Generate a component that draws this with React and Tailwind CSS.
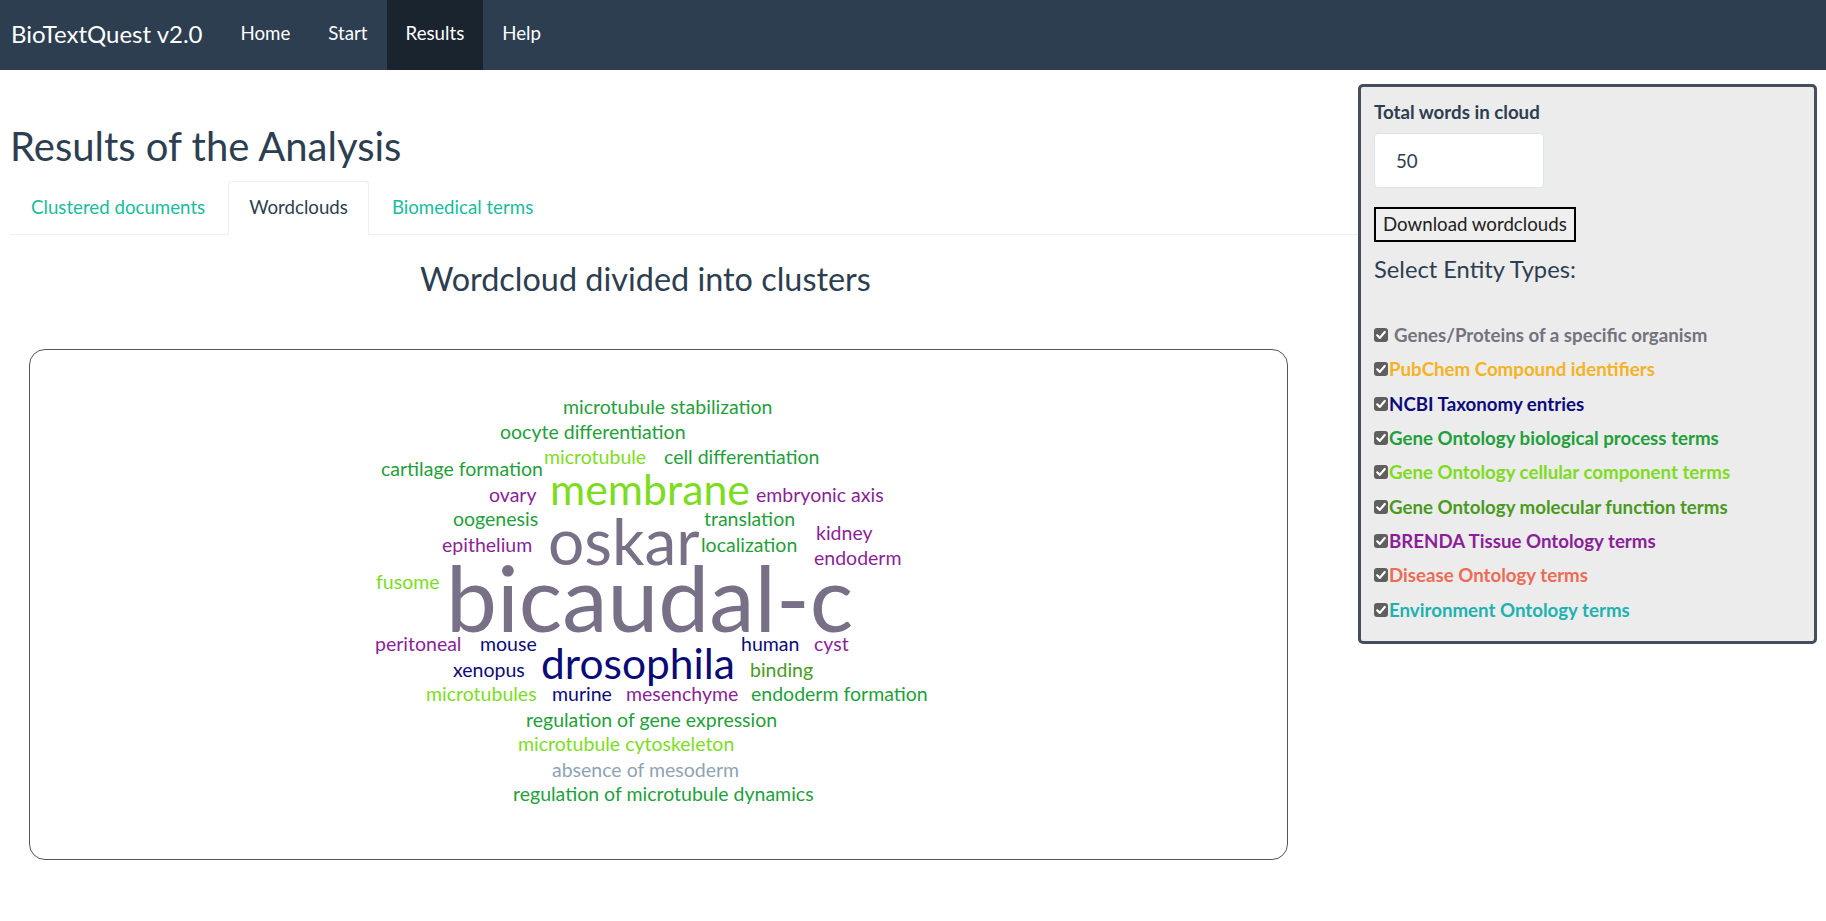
import React from 'react';

const words = [
  { t: 'microtubule stabilization', x: 562, y: 407, s: 19.5, c: '#1fa03b' },
  { t: 'oocyte differentiation', x: 499, y: 432, s: 19.5, c: '#1fa03b' },
  { t: 'microtubule', x: 543, y: 457, s: 19.5, c: '#7ddc1f' },
  { t: 'cell differentiation', x: 663, y: 457, s: 19.5, c: '#1fa03b' },
  { t: 'cartilage formation', x: 380, y: 469, s: 19.5, c: '#1fa03b' },
  { t: 'membrane', x: 549, y: 491, s: 42.8, c: '#7ddc1f' },
  { t: 'ovary', x: 488, y: 495, s: 19.5, c: '#8b1f98' },
  { t: 'embryonic axis', x: 755, y: 495, s: 19.5, c: '#8b1f98' },
  { t: 'oogenesis', x: 452, y: 519, s: 19.5, c: '#1fa03b' },
  { t: 'translation', x: 703, y: 519, s: 19.5, c: '#1fa03b' },
  { t: 'oskar', x: 547, y: 544, s: 64, c: '#787086' },
  { t: 'kidney', x: 815, y: 533, s: 19.5, c: '#8b1f98' },
  { t: 'epithelium', x: 441, y: 545, s: 19.5, c: '#8b1f98' },
  { t: 'localization', x: 700, y: 545, s: 19.5, c: '#1fa03b' },
  { t: 'endoderm', x: 813, y: 558, s: 19.5, c: '#8b1f98' },
  { t: 'fusome', x: 375, y: 582, s: 19.5, c: '#7ddc1f' },
  { t: 'bicaudal-c', x: 445, y: 600.5, s: 91, c: '#787086' },
  { t: 'peritoneal', x: 374, y: 644, s: 19.5, c: '#8b1f98' },
  { t: 'mouse', x: 479, y: 644, s: 19.5, c: '#0b0b78' },
  { t: 'human', x: 740, y: 644, s: 19.5, c: '#0b0b78' },
  { t: 'cyst', x: 813, y: 644, s: 19.5, c: '#8b1f98' },
  { t: 'xenopus', x: 452, y: 670, s: 19.5, c: '#0b0b78' },
  { t: 'drosophila', x: 540, y: 665, s: 42.5, c: '#0b0b78' },
  { t: 'binding', x: 749, y: 670, s: 19.5, c: '#4a9a1e' },
  { t: 'microtubules', x: 425, y: 694, s: 19.5, c: '#7ddc1f' },
  { t: 'murine', x: 551, y: 694, s: 19.5, c: '#0b0b78' },
  { t: 'mesenchyme', x: 625, y: 694, s: 19.5, c: '#8b1f98' },
  { t: 'endoderm formation', x: 750, y: 694, s: 19.5, c: '#1fa03b' },
  { t: 'regulation of gene expression', x: 525, y: 720, s: 19.5, c: '#1fa03b' },
  { t: 'microtubule cytoskeleton', x: 517, y: 744, s: 19.5, c: '#7ddc1f' },
  { t: 'absence of mesoderm', x: 551, y: 770, s: 19.5, c: '#8fa3b4' },
  { t: 'regulation of microtubule dynamics', x: 512, y: 794, s: 19.5, c: '#1fa03b' },
];

const entityTypes = [
  { label: 'Genes/Proteins of a specific organism', color: 'text-[#74727c]', first: true },
  { label: 'PubChem Compound identifiers', color: 'text-[#f5b324]' },
  { label: 'NCBI Taxonomy entries', color: 'text-[#0b0b7a]' },
  { label: 'Gene Ontology biological process terms', color: 'text-[#1fa03b]' },
  { label: 'Gene Ontology cellular component terms', color: 'text-[#7ddc1f]' },
  { label: 'Gene Ontology molecular function terms', color: 'text-[#4a9a1e]' },
  { label: 'BRENDA Tissue Ontology terms', color: 'text-[#8b1f98]' },
  { label: 'Disease Ontology terms', color: 'text-[#ec6b55]' },
  { label: 'Environment Ontology terms', color: 'text-[#20b2ae]' },
];

const CheckBox = () => (
  <span className="w-[14px] h-[14px] rounded-[3px] bg-[#5f5f5f] flex items-center justify-center shrink-0">
    <svg width="12" height="12" viewBox="0 0 12 12">
      <path d="M2.2 6.3 L4.8 8.9 L9.8 3" fill="none" stroke="#fff" strokeWidth="2.2" strokeLinecap="round" strokeLinejoin="round" />
    </svg>
  </span>
);

const App = () => {
  return (
    <div className="min-h-screen bg-white font-['Lato',sans-serif] text-[18.7px] text-[#2c3e50]">
      {/* Navbar */}
      <nav className="h-[70px] bg-[#2c3e50] flex items-stretch">
        <div className="flex items-center pl-[11px] pr-[19px] pb-[3px] text-white text-[24px]">BioTextQuest v2.0</div>
        <a className="flex items-center px-[19px] pb-[3px] text-white">Home</a>
        <a className="flex items-center px-[19px] pb-[3px] text-white">Start</a>
        <a className="flex items-center px-[19px] pb-[3px] text-white bg-[#1a242f]">Results</a>
        <a className="flex items-center px-[19px] pb-[3px] text-white">Help</a>
      </nav>

      <div className="flex pl-[10px] pr-[9px]">
        {/* Main panel */}
        <div className="flex-1">
          <h1 className="text-[40px] leading-[44px] pt-[54px] pb-[13px]">Results of the Analysis</h1>

          <div className="flex border-b border-[#ecf0f1]">
            <div className="px-[21px] py-[14px] mr-[2px] leading-[25px] text-[#18bc9c]">Clustered documents</div>
            <div className="px-[20px] py-[13px] mr-[2px] leading-[25px] bg-white border border-[#ecf0f1] border-b-white -mb-px rounded-t-[4px]">Wordclouds</div>
            <div className="px-[21px] py-[14px] leading-[25px] text-[#18bc9c]">Biomedical terms</div>
          </div>

          <h3 className="text-[32.4px] leading-[38px] pl-[410px] pt-[25px]">Wordcloud divided into clusters</h3>

          <div className="relative ml-[19px] mt-[51px] w-[1259px] h-[511px] border border-[#555] rounded-[16px]">
            {words.map((w) => (
              <span
                key={w.t}
                className="absolute whitespace-nowrap leading-none"
                style={{ left: w.x - 29, top: w.y - 348 - w.s * 0.55 - 1.5, fontSize: w.s, color: w.c }}
              >
                {w.t}
              </span>
            ))}
          </div>
        </div>

        {/* Sidebar */}
        <aside className="w-[459px] mt-[14px] self-start h-[560px] bg-[#ececec] border-[3px] border-[#454e5c] rounded-[5px] px-[13px] pt-[13px]">
          <div className="font-bold leading-[25px]">Total words in cloud</div>
          <div className="mt-[8px] w-[170px] h-[55px] bg-white border border-[#dde3e8] rounded-[4px] flex items-center pl-[21px] pt-[2px] text-[#2c3e50]">50</div>
          <button className="mt-[19px] h-[35px] px-[7px] border-2 border-black bg-[#efefef] text-[#222] leading-none">Download wordclouds</button>
          <div className="mt-[13px] text-[23.7px] leading-[28px]">Select Entity Types:</div>
          <div className="mt-[35px] flex flex-col">
            {entityTypes.map((e) => (
              <div key={e.label} className="flex items-center h-[34.3px]">
                <CheckBox />
                <span className={`font-bold ${e.first ? 'ml-[6px]' : 'ml-[1px]'} ${e.color}`}>{e.label}</span>
              </div>
            ))}
          </div>
        </aside>
      </div>
    </div>
  );
};

export default App;
